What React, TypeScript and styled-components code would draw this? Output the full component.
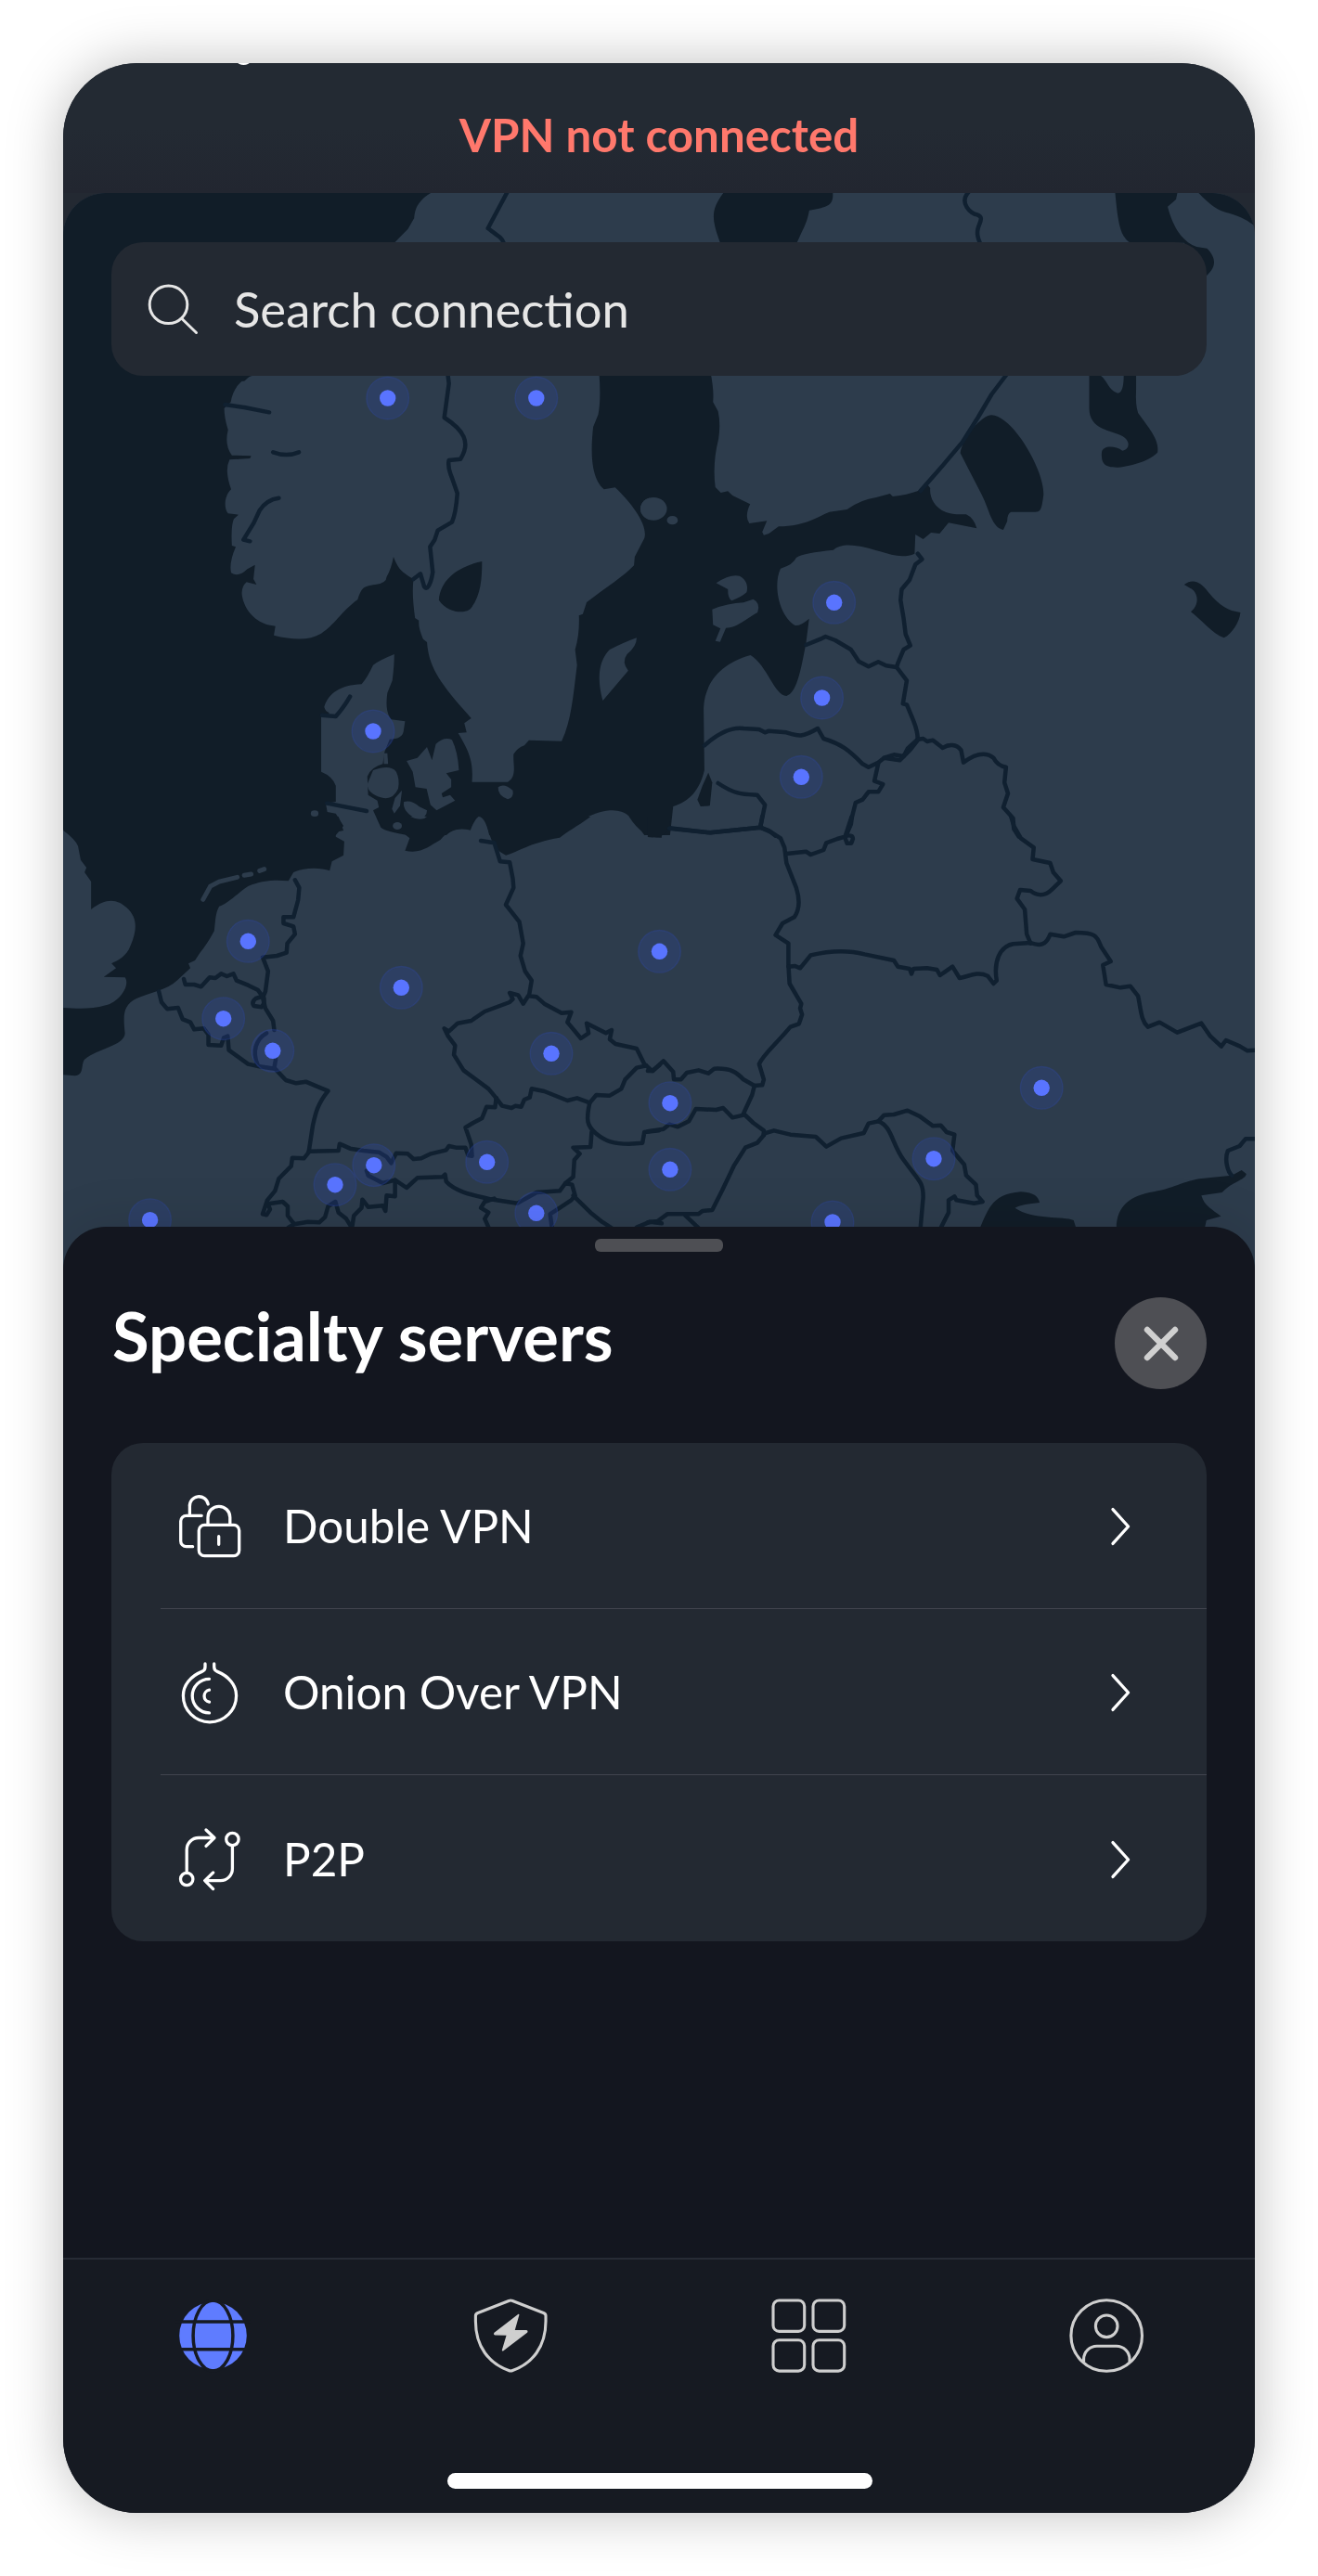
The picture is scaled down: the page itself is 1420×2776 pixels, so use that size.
import { ReactNode } from "react";
import styled, { createGlobalStyle } from "styled-components";

const GlobalStyle = createGlobalStyle`
  * {
    box-sizing: border-box;
  }
  body {
    margin: 0;
    background: #fff;
    font-family: Lato, "Open Sans", sans-serif;
  }
`;

const Page = styled.div`
  display: flex;
  justify-content: center;
  width: 1420px;
  height: 2776px;
  padding-top: 68px;
  overflow: hidden;
`;

const Phone = styled.main`
  display: flex;
  flex-direction: column;
  width: 1284px;
  height: 2640px;
  border-radius: 80px;
  box-shadow: 0 0 60px rgba(0, 0, 0, 0.25);
`;

const Screen = styled.div`
  position: relative;
  display: flex;
  flex-direction: column;
  height: 100%;
  overflow: hidden;
  border-radius: 80px;
  background: #232932;
`;

const Speck = styled.span`
  position: absolute;
  top: -4px;
  left: 188px;
  width: 13px;
  height: 6px;
  border-radius: 50%;
  background: #fff;
`;

const Status = styled.header`
  flex: none;
  height: 140px;
  padding-top: 47px;
  background: linear-gradient(#232a33 50%, #222630);
  color: #ff786c;
  font-size: 49.3px;
  line-height: 60px;
  font-weight: 700;
  text-align: center;
`;

const MapArea = styled.section`
  position: relative;
  flex: none;
  height: 1160px;
  padding: 53px 52px 0;
  overflow: hidden;
  border-radius: 46px 46px 0 0;
  background: #2d3c4c;
`;

const MapDrawing = styled.svg`
  position: absolute;
  inset: 0;

  .sea {
    fill: #111d28;
    stroke: none;
  }
  .land {
    fill: #2d3c4c;
    stroke: none;
  }
  .line {
    fill: none;
    stroke: #102030;
    stroke-width: 4.5;
    stroke-linejoin: round;
    stroke-linecap: round;
    vector-effect: non-scaling-stroke;
  }
  .sand {
    fill: none;
    stroke: #2d3c4c;
    stroke-width: 5;
    stroke-linecap: round;
    vector-effect: non-scaling-stroke;
  }
`;

const Search = styled.div`
  position: relative;
  display: flex;
  align-items: center;
  gap: 36px;
  height: 144px;
  padding-left: 36px;
  border-radius: 34px;
  background: #232932;
  color: #e6e6e6;
  font-size: 52.6px;
`;

const SearchText = styled.span`
  margin-bottom: 2px;
`;

const Sheet = styled.section`
  position: relative;
  flex: 1;
  display: flex;
  flex-direction: column;
  margin-top: -46px;
  padding: 13px 52px 0;
  border-radius: 46px 46px 0 0;
  background: #13161f;
  box-shadow: 0 0 60px rgba(0, 0, 0, 0.12);
`;

const Handle = styled.div`
  align-self: center;
  width: 138px;
  height: 14px;
  border-radius: 6px;
  background: #4e4f54;
`;

const SheetHead = styled.div`
  display: flex;
  align-items: center;
  justify-content: space-between;
  height: 99px;
  margin-top: 49px;
`;

const Title = styled.h1`
  margin: 0 0 18px 1px;
  color: #fff;
  font-size: 72.4px;
  line-height: 86px;
  font-weight: 700;
`;

const Close = styled.button`
  display: flex;
  align-items: center;
  justify-content: center;
  width: 99px;
  height: 99px;
  padding: 0;
  border: 0;
  border-radius: 50%;
  background: #4e4f54;
`;

const List = styled.div`
  display: flex;
  flex-direction: column;
  margin-top: 58px;
  padding-left: 53px;
  border-radius: 34px;
  background: #232932;
`;

const Row = styled.div<{ $last?: boolean }>`
  display: flex;
  align-items: center;
  height: 179px;
  padding: 0 80px 0 17px;
  border-bottom: ${(p) => (p.$last ? "none" : "1px solid #41444e")};
`;

const RowLabel = styled.span`
  flex: 1;
  margin-left: 43px;
  color: #fff;
  font-size: 49.4px;
  line-height: 58px;
`;

const NavBar = styled.nav`
  position: relative;
  flex: none;
  display: flex;
  flex-direction: column;
  align-items: center;
  height: 275px;
  border-top: 2px solid #272b35;
  background: #161a22;
`;

const Tabs = styled.div`
  display: flex;
  width: 100%;
  padding-top: 37px;
`;

const Tab = styled.div`
  flex: 1;
  display: flex;
  justify-content: center;
`;

const HomeBar = styled.div`
  width: 458px;
  height: 17px;
  margin: 103px 0 0 1px;
  border-radius: 8.5px;
  background: #fff;
`;

const pins = [
  [417.7, 429], [577.8, 429], [402, 788], [898.7, 649.3], [885.6, 752],
  [863.3, 837.3], [267.3, 1014.3], [240.7, 1097.7], [293.8, 1132.3],
  [432.3, 1064.3], [594, 1135.3], [402.8, 1255.7], [361, 1276.7],
  [524.7, 1252.3], [577.8, 1307.3], [161.6, 1314.7], [710.5, 1025.3],
  [721.9, 1188.7], [721.9, 1260.3], [1122.2, 1172.3], [1006, 1248.7],
  [897, 1317],
];

// The map is cut in tiles, each with its own grid
const EuropeMap = () => (
  <MapDrawing width="1284" height="1160" viewBox="68 208 1284 1160">
    <g transform="translate(40 40) scale(.44643 .33333)">
      <path className="sea" d="M60 500H955C915 530 912 560 910 585L895 620L862 665L500 1112H60Z" />
      <path className="line" d="M1135 500L1088 618L1110 640Q1122 650 1126 665" />
    </g>
    <g transform="translate(700 40) scale(.44643 .33333)">
      <path className="sea" d="M180 500C145 560 150 590 170 665H355C370 620 380 600 385 560C420 550 440 550 442 515V500Z" />
      <path className="sea" d="M1123 500C1130 600 1135 645 1160 665H1290L1325 770H1345C1370 740 1365 710 1345 683L1320 678C1280 660 1260 600 1250 548L1270 525L1274 500Z" />
      <path className="sea" d="M1322 500C1350 540 1370 562 1400 570C1430 582 1445 595 1462 612V500Z" />
      <path className="line" d="M770 500C745 535 775 572 790 574C808 582 795 600 792 620Q788 640 797 665" />
    </g>

    {/* Scandinavia */}
    <g transform="translate(60 400) scale(.41454 .33333)">
      <path
        className="sea"
        d="M0 0H510V15C480 25 460 60 455 100L438 120Q438 150 448 190Q438 240 458 272L508 274L505 282L452 286Q438 320 456 382C440 400 435 440 448 460L475 464L463 478Q455 500 458 564L468 568Q450 620 456 652Q475 668 498 640L518 626L514 672L522 690L496 682Q480 700 485 730C495 790 535 822 571 824L567 854C620 870 660 870 690 848C725 820 740 780 785 738C795 700 800 695 830 690Q860 685 860 665Q872 640 878 600C890 640 900 650 930 672Q925 720 934 798L944 806Q942 830 955 866L965 876C970 960 1000 1010 1080 1122L1062 1138L1068 1168L1046 1170C1080 1240 1085 1270 1082 1328H1175C1200 1310 1188 1270 1190 1238Q1200 1218 1218 1210L1230 1193L1315 1196C1340 1130 1345 1050 1355 950L1350 900Q1362 850 1360 790L1370 785L1380 747C1430 700 1480 660 1503 628L1505 600L1530 540C1540 500 1500 430 1454 376L1425 382C1395 350 1388 280 1397 180L1410 140Q1418 90 1412 0H1568V1500H1530C1490 1430 1480 1420 1440 1420C1390 1425 1340 1470 1318 1500H1127C1120 1460 1110 1440 1099 1440Q1088 1450 1078 1484Q1040 1470 1015 1500H918Q860 1490 845 1475L825 1420L840 1410L836 1388L812 1370L810 1310Q820 1280 850 1270L855 1230L868 1190Q900 1190 904 1165L908 1132L872 1126Q855 1100 862 1040L875 1000Q880 950 880 915Q840 935 825 950Q810 990 795 1012C740 1015 710 1040 698 1085Q700 1100 712 1105L690 1115V1295Q720 1310 728 1340V1392L702 1398L706 1425L728 1430L748 1470L728 1500H60L20 1482L0 1480Z"
      />
      <path className="sea" d="M1108 615C1050 630 1000 670 996 740C1020 785 1070 785 1080 765C1105 725 1108 670 1108 615Z" />
      <ellipse className="land" cx="1552" cy="445" rx="32" ry="37" />
      <path className="land" d="M1510 862Q1480 875 1440 900C1408 940 1408 1000 1422 1065L1488 968Q1470 940 1485 915Q1510 890 1510 862Z" />
      <path className="land" d="M825 1290Q870 1270 885 1295Q895 1320 890 1350Q875 1390 845 1378Q810 1365 810 1335Z" />
      <path className="land" d="M912 1260L940 1250L965 1215L978 1258L988 1205Q1010 1180 1030 1192Q1045 1230 1048 1290L1015 1300L1028 1320V1345L1003 1365L1006 1378L1025 1370L1038 1388L990 1420L974 1402L964 1350L935 1345L928 1295Z" />
      <path className="land" d="M905 1392Q925 1385 945 1408L965 1420Q965 1445 940 1449Q900 1425 905 1392Z" />
      <path className="land" d="M900 1355L895 1405L880 1430L874 1415L882 1380Z" />
      <path className="land" d="M852 1235H862L864 1270H853Z" />
      <path className="land" d="M1150 1345Q1165 1330 1188 1355Q1192 1378 1175 1384Q1148 1372 1150 1345Z" />
      <circle className="land" cx="673" cy="1430" r="10" />
      <circle className="land" cx="888" cy="1470" r="12" />
      <path
        className="line"
        d="M1018 0L1022 40L1010 150C1060 190 1080 230 1052 284L1022 288Q1018 310 1030 345L1044 395Q1040 460 1030 488L993 515L985 545L973 568L980 650C975 690 965 710 958 697L948 655L930 672"
      />
      <path className="line" d="M440 108L490 117L555 133M565 262Q600 278 632 262M580 410Q548 415 530 450L515 490L488 545L505 550M705 1397L808 1422M692 1112L728 1116Q750 1085 765 1052" />
    </g>

    {/* Baltics and north west Russia */}
    <g transform="translate(700 400) scale(.42092 .33333)">
      <path
        className="sea"
        d="M0 0H155Q165 60 162 100L175 130Q182 170 176 220Q160 300 168 375L182 393L200 388L212 402L257 430Q242 470 255 492L300 484L288 520L292 530L305 525L330 502C400 500 430 470 460 455L505 447Q540 415 580 408L615 396L622 405Q660 400 685 388L712 368L718 378C715 420 740 460 785 463L810 463Q830 475 837 508L765 490L742 525L720 522L700 543L680 528L678 590C650 605 620 595 590 583C550 568 495 548 470 578C420 585 390 590 375 603Q368 625 335 638C315 690 330 790 372 822Q385 825 408 800L400 880C385 980 375 1040 350 1050C320 1050 300 950 258 918C180 945 140 1010 138 1090L140 1290C125 1370 90 1395 60 1407L52 1500H0Z"
      />
      <path className="sea" d="M150 1298L160 1330L154 1405L130 1407L122 1385L135 1340Z" />
      <path className="sea" d="M795 265C800 215 850 142 875 142C930 145 1010 320 1008 400C1003 450 1000 456 985 455L925 455Q915 460 915 485L905 513C875 505 870 450 850 400Z" />
      <path className="sea" d="M1125 0V120C1125 190 1180 190 1210 210C1235 230 1225 255 1210 257C1190 240 1160 240 1157 262C1155 300 1165 312 1200 311C1250 305 1290 280 1300 262C1305 220 1275 180 1250 135Q1243 110 1245 60V0H1213C1215 60 1205 75 1195 70C1175 60 1170 30 1155 15L1150 0Z" />
      <path className="sea" d="M1368 690C1390 670 1410 680 1430 715C1460 760 1480 775 1512 780C1510 810 1490 850 1470 862C1440 850 1410 800 1385 778C1412 750 1400 710 1384 702Z" />
      <ellipse className="land" cx="10" cy="445" rx="34" ry="37" />
      <circle className="land" cx="58" cy="482" r="14" />
      <path className="land" d="M170 685Q205 655 230 662Q255 680 248 715Q235 730 210 742Q200 735 200 705Z" />
      <path className="land" d="M160 770Q200 750 240 748L265 737Q285 750 276 780C235 810 225 828 195 830L180 875L168 872L181 832L162 820Z" />
      <path
        className="line"
        d="M920 0L875 75L840 150L800 230L750 305L693 387M686 590L697 608L680 625L665 675L645 705L642 740L650 800L655 850L667 887L650 900L635 945L632 957L658 1000L648 1075L658 1078L675 1130Q686 1165 686 1190"
      />
      <path className="line" d="M400 885L437 866L450 858L475 870L515 900L535 938L560 955L585 940L605 952L632 957" />
      <path
        className="line"
        d="M140 1210C180 1165 210 1150 240 1155L280 1158L295 1168L305 1163L350 1168C380 1180 390 1185 430 1155L445 1188C490 1205 510 1225 545 1270L560 1280L585 1265L600 1250L625 1240L650 1245L660 1220L686 1190"
      />
      <path
        className="line"
        d="M600 1250L640 1258L668 1222L688 1190L700 1188L710 1197L725 1193L750 1218C765 1205 785 1205 797 1225L803 1265C835 1235 860 1230 880 1250Q890 1275 912 1280L908 1330L917 1365L905 1410L930 1445L932 1480L945 1505"
      />
      <path className="line" d="M585 1268L575 1325L597 1335L585 1360L560 1360L545 1385L527 1395L518 1440L515 1465L503 1500" />
      <path className="line" d="M175 1332C220 1370 240 1368 275 1370L295 1402L283 1475M50 1477L155 1492L283 1475L305 1485L322 1502" />
    </g>

    {/* Western and central Europe */}
    <g transform="translate(60 880) scale(.41454 .33333)">
      <path
        className="sea"
        d="M20 45Q52 75 58 95L65 140L80 165L75 180L92 210V300C130 262 160 265 185 295C215 330 212 370 190 430C175 460 160 465 145 475L157 490L125 518L180 520C195 545 165 600 130 610C90 625 50 620 20 618V835L50 838C75 835 65 800 75 785C110 750 180 740 180 700C175 640 175 610 210 588C240 570 290 560 315 530L350 490L345 475L362 465L375 440Q395 410 412 370C415 340 415 310 425 290C450 280 470 250 500 225C540 205 570 205 605 208L618 180C650 162 690 165 712 175L718 145L748 125L750 80L728 65V50L748 45L735 0H20Z"
      />
      <path className="sea" d="M835 0C840 30 870 50 905 55L920 70L908 110C950 122 970 95 1000 75C1020 45 1040 35 1075 42L1092 0Z" />
      <path className="sea" d="M1115 0L1128 60Q1140 110 1170 125C1200 115 1230 85 1310 68C1340 40 1370 20 1390 0Z" />
      <path className="sea" d="M1490 0C1515 50 1545 70 1575 68V0Z" />
      <circle className="land" cx="888" cy="30" r="12" />
      <path className="land" d="M922 0Q940 12 958 6L965 0Z" />
      <path className="sand" d="M383 268L402 225L425 210L472 196M490 190L508 186M530 175L542 170" />
      <path
        className="line"
        d="M622 205L633 230L630 270L618 325L592 325V345L618 355L622 380L602 410L600 440L575 450L538 455L552 500L545 565L540 580M540 580Q545 605 535 616L515 612Q508 600 520 588Z"
      />
      <path
        className="line"
        d="M333 525L337 543H360L378 550L400 520L415 522L430 508L445 516L462 508L470 530L500 545L525 560L537 580L545 620L565 660L568 690"
      />
      <path
        className="line"
        d="M268 565L275 600L290 622L318 618L330 655L350 665L360 688L385 685L397 705V738L430 740L437 715L447 710L450 755L500 800L530 808L570 815L598 852L625 862L650 857L690 878L708 887C680 930 675 960 668 1000L658 1082"
      />
      <path className="line" d="M548 700C520 720 510 760 525 803M572 785L568 812" />
      <path
        className="line"
        d="M658 1082L735 1080L738 1058L765 1073L800 1080L840 1085L860 1100L872 1120L885 1088L915 1090L930 1107L950 1105L975 1090L1015 1078L1022 1065L1040 1070H1065L1072 1095L1082 1097L1080 1060L1065 1005L1085 990L1108 975L1120 938L1142 940L1145 910"
      />
      <path
        className="line"
        d="M658 1085L645 1105L615 1103L612 1130L580 1170L570 1210L550 1240L538 1285L548 1288L557 1270L552 1252L590 1245L603 1260V1290L620 1318L605 1328M620 1318L655 1310L685 1312L700 1295L708 1260L727 1245L735 1280L755 1300L770 1330L775 1290L795 1265L797 1238L812 1262L850 1258L857 1275L860 1225L882 1228V1175"
      />
      <path
        className="line"
        d="M808 1145L812 1160L850 1185L882 1175L912 1200L940 1168L1005 1165L1012 1157L1015 1180C1040 1215 1090 1225 1130 1237L1200 1250L1250 1215L1310 1210L1325 1185L1342 1190L1350 1225L1340 1240L1310 1265L1285 1285L1290 1330"
      />
      <path className="line" d="M1140 1235L1115 1245L1105 1265L1125 1280L1115 1300L1125 1328M1345 1225L1390 1280L1420 1310L1445 1330M1510 1328L1545 1310L1575 1315" />
      <path className="line" d="M1325 1185L1345 1165L1348 1110L1362 1090L1345 1070L1390 1068L1393 1020" />
      <path className="line" d="M1388 925C1378 980 1380 1000 1405 1025C1430 1050 1450 1058 1490 1058L1525 1055L1530 1020L1568 1015" />
      <path
        className="line"
        d="M1145 910L1160 935L1185 942L1195 935L1210 938L1218 915L1232 908L1237 880L1270 888L1330 918L1355 910L1388 925L1405 900L1440 902L1470 880L1480 850L1510 812L1535 805"
      />
      <path
        className="line"
        d="M1145 910L1125 880L1060 820L1035 770L1038 740L1020 710L1010 685L1022 694L1045 668L1080 660L1115 630L1180 600L1188 590L1180 570L1202 577L1215 605L1228 580"
      />
      <path
        className="line"
        d="M1105 78L1140 85L1155 145L1180 148L1188 200L1190 230L1170 285L1205 340L1215 410L1208 450L1220 500L1237 530L1230 580L1250 583L1270 605L1315 635L1340 632L1330 665L1365 717L1385 700L1380 668L1430 700L1445 690L1440 720L1455 735L1510 750L1530 800L1550 822L1568 805"
      />
    </g>

    {/* Poland to the Black Sea */}
    <g transform="translate(700 880) scale(.42092 .33333)">
      <path className="sea" d="M-5 0H54L50 38C40 65 15 70 -5 66Z" />
      <path className="sea" d="M840 1345C865 1280 870 1220 950 1213C985 1215 995 1230 998 1248C970 1252 950 1255 935 1265C980 1305 1060 1290 1085 1305L1095 1345Z" />
      <path
        className="sea"
        d="M1195 1345C1190 1260 1230 1225 1290 1213C1350 1200 1370 1172 1430 1168L1490 1160L1515 1143L1527 1155C1525 1175 1490 1180 1465 1215L1412 1225C1420 1260 1440 1270 1462 1292L1425 1305L1418 1345Z"
      />
      <path
        className="line"
        d="M50 38L155 52L283 35L288 0M283 35L310 50L335 70L345 100L350 150L375 230Q390 290 370 325L340 345L322 383L355 410L355 480L358 540L388 605L385 620L390 640L382 670L360 680C320 740 290 770 280 800L292 850L288 868L268 870"
      />
      <path className="line" d="M350 120L400 113L412 123L445 108L452 85L480 72L500 65L517 0M503 62Q520 58 520 72L516 86H505L500 68" />
      <path
        className="line"
        d="M925 0L932 30L950 70L983 100L980 138L1025 150L1033 180L1052 208L1030 235C1010 260 990 255 975 240L948 237L940 265L960 300L965 380L975 410"
      />
      <path
        className="line"
        d="M355 485L372 483L385 490L412 448C470 430 520 435 550 445L625 465L635 485L665 492L670 508L675 492L710 490L735 495L743 513L775 485L793 522C820 515 840 500 865 515L880 540L888 530C880 470 895 420 930 412L975 408C1000 420 1015 415 1025 380L1060 388L1090 375C1140 375 1145 385 1155 420L1180 468L1160 480L1168 543L1205 553L1230 548L1250 580C1258 630 1258 660 1275 680L1305 665L1350 698L1412 668L1435 710L1463 743L1475 723L1510 742L1530 757L1555 755"
      />
      <path className="line" d="M-5 822L8 822L35 790L60 825L62 850H80L95 828L125 820L150 830L165 815C210 812 225 830 240 850L268 870L262 900L240 960L265 990L292 1015V1030" />
      <path className="line" d="M-5 1018L35 1010L50 995L72 1003L100 985L118 945L170 948L188 942L212 973L240 965" />
      <path className="line" d="M292 1030L275 1055L245 1070L215 1130L185 1210L160 1272L135 1275L125 1285H45L20 1308L-5 1312M90 1288L125 1330" />
      <path
        className="line"
        d="M292 1025L318 1015L360 1028L425 1035L452 1067L490 1040L548 1023L560 992L585 985L600 965L625 963L660 950L690 968L725 1000L745 998L760 1020L780 1028L775 1080L805 1125L810 1160L835 1190L838 1225L852 1245L830 1250L785 1240L780 1228L765 1240V1280L745 1330"
      />
      <path className="line" d="M585 985C620 1000 620 1060 650 1110C690 1180 700 1180 700 1230L693 1330M1555 1042H1525L1510 1065L1480 1080C1470 1110 1480 1150 1490 1160" />
    </g>

    {pins.map(([x, y]) => (
      <g key={`${x}-${y}`}>
        <circle cx={x} cy={y} r="22.8" fill="#3048b0" fillOpacity=".23" stroke="#3048b0" strokeOpacity=".3" strokeWidth="1.4" />
        <circle cx={x} cy={y} r="8.7" fill="#5974ff" />
      </g>
    ))}
  </MapDrawing>
);

const RowIcon = ({ children }: { children: ReactNode }) => (
  <svg width="72" height="72" viewBox="0 0 72 72" fill="none" stroke="#fff" strokeWidth="3.3" strokeLinecap="round" strokeLinejoin="round">
    {children}
  </svg>
);

const servers = [
  {
    name: "Double VPN",
    icon: (
      <RowIcon>
        <rect x="24.3" y="35.3" width="43.4" height="33.4" rx="6" />
        <path d="M34 35V27.2a11.9 11.9 0 0 1 23.8 0V35M45.7 47.7V56.3" />
        <path d="M27.2 25.3H10.7a6 6 0 0 0-6 6V52.7a6 6 0 0 0 6 6H17.6M14.4 25V15.7a10 10 0 0 1 19.8-2.7" />
      </RowIcon>
    ),
  },
  {
    name: "Onion Over VPN",
    icon: (
      <RowIcon>
        <path d="M31 6V9.5Q31 13 27.5 14.4C15.2 19.4 7.4 29 7.4 40.2a28.6 28.6 0 0 0 57.2 0C64.6 29 56.4 19.4 44.2 14.4Q40.8 13 40.7 9.5V6" />
        <path d="M35.5 22.3a18.3 18.3 0 0 0 0 36.6M35.5 34.2a6.6 6.6 0 0 0 0 13" />
      </RowIcon>
    ),
  },
  {
    name: "P2P",
    icon: (
      <RowIcon>
        <circle cx="11.2" cy="58" r="6.7" />
        <circle cx="60.4" cy="15" r="6.7" />
        <path d="M11.2 51.3V26.3a12.8 12.8 0 0 1 12.8-12.8H41M32 5L41 13.5L32 22.4" />
        <path d="M60.4 22V46.8a12.8 12.8 0 0 1-12.8 12.8H30.7M39.6 51L30.7 59.6L39.6 68.6" />
      </RowIcon>
    ),
  },
];

const App = () => {
  return (
    <Page>
      <GlobalStyle />
      <Phone>
        <Screen>
          <Speck />
          <Status>VPN not connected</Status>
          <MapArea>
            <EuropeMap />
            <Search>
              <svg width="60" height="60" viewBox="156 303 60 60" fill="none" stroke="#e6e6e6" strokeWidth="3" strokeLinecap="round">
                <circle cx="181.5" cy="328.3" r="20.3" />
                <path d="M196 343.5L211.5 358.5" />
              </svg>
              <SearchText>Search connection</SearchText>
            </Search>
          </MapArea>
          <Sheet>
            <Handle />
            <SheetHead>
              <Title>Specialty servers</Title>
              <Close aria-label="Close">
                <svg width="40" height="40" viewBox="0 0 40 40" stroke="#d0d0d0" strokeWidth="6.4" strokeLinecap="round">
                  <path d="M5 5L35 35M35 5L5 35" />
                </svg>
              </Close>
            </SheetHead>
            <List>
              {servers.map((s, i) => (
                <Row key={s.name} $last={i === servers.length - 1}>
                  {s.icon}
                  <RowLabel>{s.name}</RowLabel>
                  <svg width="24" height="44" viewBox="0 0 24 44" fill="none" stroke="#fff" strokeWidth="3.3" strokeLinecap="round" strokeLinejoin="round">
                    <path d="M3 4.6L19.6 23L3 41.4" />
                  </svg>
                </Row>
              ))}
            </List>
          </Sheet>
          <NavBar>
            <Tabs>
              <Tab>
                <svg width="90" height="90" viewBox="0 0 90 90">
                  <circle cx="45.5" cy="45" r="36.3" fill="#5f7cff" />
                  <g fill="none" stroke="#161a22" strokeWidth="3.5">
                    <ellipse cx="45.5" cy="45" rx="21.4" ry="38" />
                    <path d="M5 30H86M5 59.7H86" />
                  </g>
                </svg>
              </Tab>
              <Tab>
                <svg width="90" height="90" viewBox="0 0 90 90" fill="none" stroke="#cfcfcf" strokeWidth="3.1" strokeLinejoin="round">
                  <path d="M43.8 7.3Q45.2 6.6 46.6 7.3L80.5 20.5Q83 21.5 83 23.5V29.5C83 57 68.5 75 47.3 82.5Q45.2 83.4 43.1 82.5C22 75 7.4 57 7.4 29.5V23.5Q7.4 21.5 9.9 20.5Z" />
                  <path fill="#cfcfcf" strokeWidth="1.6" d="M53.6 22.6L28 42.3Q27.4 43.5 28.8 43.7L41.6 44L36.6 60.8L62.5 41.2Q63.2 39.8 61.8 39.7L48.8 39.5Z" />
                </svg>
              </Tab>
              <Tab>
                <svg width="90" height="90" viewBox="0 0 90 90" fill="none" stroke="#cfcfcf" strokeWidth="3.1">
                  <rect x="7" y="7" width="33.7" height="33.4" rx="6.5" />
                  <rect x="50" y="7" width="33.7" height="33.4" rx="6.5" />
                  <rect x="7" y="49.7" width="33.7" height="33.4" rx="6.5" />
                  <rect x="50" y="49.7" width="33.7" height="33.4" rx="6.5" />
                </svg>
              </Tab>
              <Tab>
                <svg width="90" height="90" viewBox="0 0 90 90" fill="none" stroke="#cfcfcf" strokeWidth="3.1">
                  <circle cx="45.2" cy="45" r="38.3" />
                  <circle cx="45.2" cy="34.8" r="11.8" />
                  <path d="M20.6 73V70.5A14.2 14.2 0 0 1 34.8 56.3H55.8A14.2 14.2 0 0 1 70 70.5V73" />
                </svg>
              </Tab>
            </Tabs>
            <HomeBar />
          </NavBar>
        </Screen>
      </Phone>
    </Page>
  );
};

export default App;
